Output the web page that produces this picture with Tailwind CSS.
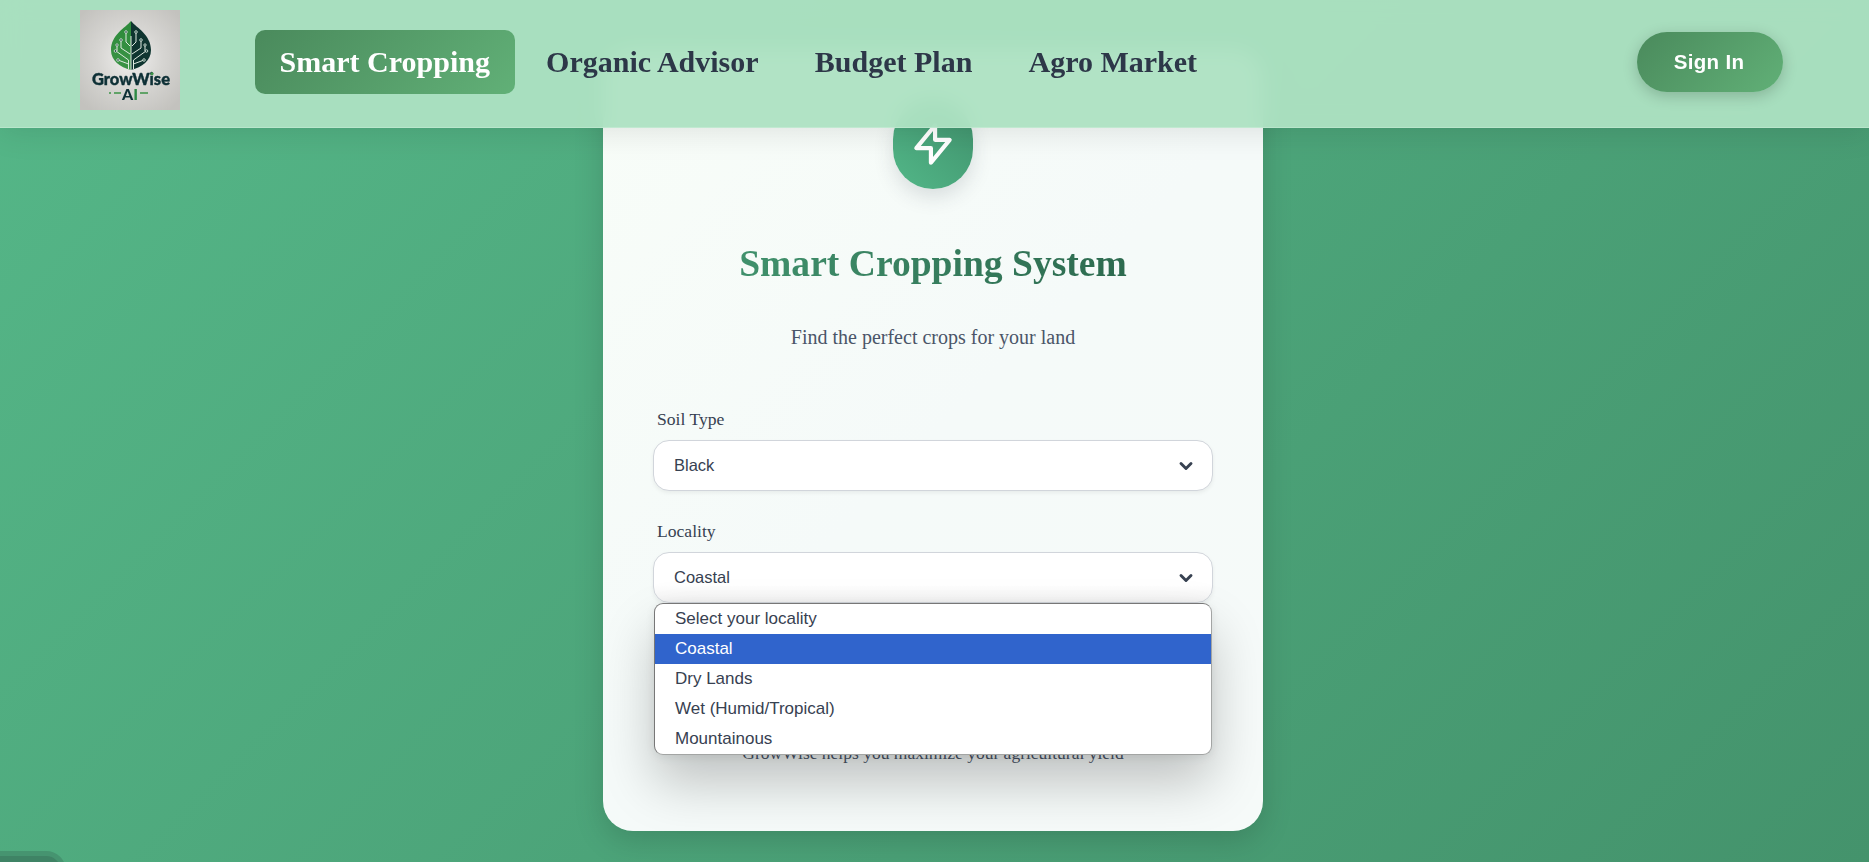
<!DOCTYPE html>
<html lang="en">
<head>
<meta charset="utf-8">
<title>GrowWise AI - Smart Cropping</title>
<script src="https://cdn.jsdelivr.net/npm/@tailwindcss/browser@4"></script>
</head>
<body class="relative h-[862px] overflow-hidden bg-[linear-gradient(135deg,#55b788_0%,#44936c_100%)] font-['Liberation_Serif',serif]">

<header class="absolute inset-x-0 top-0 z-20 flex h-32 items-start border-b border-white/20 bg-[#ade1c2]/95 pl-20 pr-[86px] shadow-[0_4px_30px_rgba(0,0,0,0.1)] backdrop-blur-[10px]">
  <svg class="mt-2.5 h-[100px] w-[100px] shrink-0" viewBox="0 0 100 100">
    <defs>
      <radialGradient id="lg-bg" cx="50%" cy="48%" r="65%"><stop offset="0" stop-color="#f1f0ef"/><stop offset=".5" stop-color="#d6d5d2"/><stop offset="1" stop-color="#c3c2be"/></radialGradient>
      <linearGradient id="lg-leaf" x1="0" y1="0" x2="0" y2="1"><stop offset="0" stop-color="#2c8a3a"/><stop offset="1" stop-color="#3c9447"/></linearGradient>
    </defs>
    <rect width="100" height="100" fill="url(#lg-bg)"/>
    <path d="M51 11C45 18 31 25 31 40C31 51 40 57 51 60Z" fill="url(#lg-leaf)"/>
    <path d="M51 11C57 18 71 25 71 40C71 51 62 57 51 60Z" fill="#0f3530"/>
    <g fill="none" stroke="#dfeae0" stroke-width="1">
      <path d="M51 60V26M48.5 59V50L36 41M48.5 54L38 50M50 44L41 38V31M50 36L46 32V23M53.500 59V50L66 41M53.500 54L64 50M52 44L61 38V31M52 36L56 32V23M37 36V41M65 36V41"/>
    </g>
    <g fill="#12403a" stroke="#dfeae0" stroke-width=".8">
      <circle cx="46" cy="22" r="1.3"/><circle cx="56" cy="22" r="1.3"/><circle cx="41" cy="30" r="1.3"/><circle cx="61" cy="30" r="1.3"/><circle cx="37" cy="35" r="1.2"/><circle cx="65" cy="35" r="1.2"/><circle cx="35.500" cy="41" r="1.3"/><circle cx="66.500" cy="41" r="1.3"/><circle cx="38" cy="50" r="1.3"/><circle cx="64" cy="50" r="1.3"/>
    </g>
    <text x="12" y="75" textLength="78" lengthAdjust="spacingAndGlyphs" class="font-['Lato',sans-serif] text-[16.5px] font-black" fill="#0e3036" stroke="#0e3036" stroke-width=".4">GrowWise</text>
    <circle cx="72" cy="63.8" r="1.5" fill="#3c9447"/>
    <text x="42" y="89.5" textLength="16" lengthAdjust="spacingAndGlyphs" class="font-['Lato',sans-serif] text-[15px] font-black" fill="#0e3036">A<tspan fill="#2f8a45">I</tspan></text>
    <path d="M29 83h2M34 83h7M60 83h8" stroke="#3c9447" stroke-width="1.5"/>
  </svg>
  <nav class="ml-[75px] mt-[30px] flex gap-[7px] text-[30px] font-bold leading-[64px] text-[#2d3748]">
    <a class="h-16 rounded-[10px] bg-[linear-gradient(135deg,#4a8a5c,#61b077)] px-[24.6px] text-white">Smart Cropping</a>
    <a class="px-[24.6px]">Organic Advisor</a>
    <a class="px-[24.6px]">Budget Plan</a>
    <a class="px-[24.6px]">Agro Market</a>
  </nav>
  <button class="ml-auto mt-8 h-[60px] w-[146px] rounded-[30px] bg-[linear-gradient(135deg,#4a8a5c,#61b077)] pr-0.5 font-['Liberation_Sans',sans-serif] text-[20.5px] font-bold tracking-[0.3px] text-white shadow-[0_4px_15px_rgba(0,0,0,0.2)]">Sign In</button>
</header>

<main class="flex justify-center pr-[3px] pt-[49px]">
  <section class="flex h-[782px] w-[660px] flex-col items-center rounded-[30px] bg-[linear-gradient(135deg,#f8fdf8_0%,#f5faf9_50%,#f6faf9_100%)] px-[50px] pt-[50px] shadow-[0_10px_30px_rgba(0,0,0,0.15)]">
    <div class="flex h-[90px] w-20 shrink-0 items-center justify-center rounded-full bg-[linear-gradient(45deg,#52b788,#40916c)] shadow-[0_8px_20px_rgba(45,55,72,0.15)]">
      <svg class="h-[50px] w-[50px] shrink-0" viewBox="0 0 24 24" fill="none" stroke="#fff" stroke-width="2" stroke-linecap="round" stroke-linejoin="round"><path d="M13 10V3L4 14h7v7l9-11h-7z"/></svg>
    </div>
    <h1 class="mt-[51px] bg-[linear-gradient(90deg,#40916c,#2d6a4f)] bg-clip-text text-[37.6px] font-bold leading-[48px] text-transparent">Smart Cropping System</h1>
    <p class="mt-[37px] text-[20px] leading-6 text-[#4a5568]">Find the perfect crops for your land</p>
    <form class="mt-[58px] w-full text-[16.5px] text-[#374151]">
      <label class="block pl-1 text-[17.6px] leading-6">Soil Type</label>
      <div class="mt-[9px] flex h-[51px] items-center justify-between rounded-2xl border border-[#d1d5db] bg-white pl-5 pr-4 font-['Liberation_Sans',sans-serif] shadow-[0_2px_4px_rgba(0,0,0,0.06)]">
        <span>Black</span>
        <svg class="h-5 w-5" viewBox="0 0 24 24" fill="none" stroke="#374151" stroke-width="3.5" stroke-linecap="round" stroke-linejoin="round"><path d="m6 9 6 6 6-6"/></svg>
      </div>
      <label class="mt-[28px] block pl-1 text-[17.6px] leading-6">Locality</label>
      <div class="relative mt-[9px]">
        <div class="flex h-[51px] items-center justify-between rounded-2xl border border-[#d1d5db] bg-[linear-gradient(#fff_65%,#f3f3f3)] pl-5 pr-4 font-['Liberation_Sans',sans-serif] shadow-[0_2px_4px_rgba(0,0,0,0.06)]">
          <span>Coastal</span>
          <svg class="h-5 w-5" viewBox="0 0 24 24" fill="none" stroke="#374151" stroke-width="3.5" stroke-linecap="round" stroke-linejoin="round"><path d="m6 9 6 6 6-6"/></svg>
        </div>
        <ul class="absolute left-px top-[51px] z-10 w-[558px] overflow-hidden rounded-[9px] border border-[#a3a5a4] border-l-[#777] border-t-[#777] bg-white font-['Liberation_Sans',sans-serif] text-[17px] leading-[30px] shadow-[0_28px_52px_rgba(0,0,0,0.22),0_2px_10px_rgba(0,0,0,0.08)]">
          <li class="h-[30px] pl-5">Select your locality</li>
          <li class="h-[30px] bg-[#3064cc] pl-5 text-white">Coastal</li>
          <li class="h-[30px] pl-5">Dry Lands</li>
          <li class="h-[30px] pl-5">Wet (Humid/Tropical)</li>
          <li class="h-[30px] pl-5">Mountainous</li>
        </ul>
      </div>
    </form>
    <p class="mt-[138px] text-[17.5px] leading-6 text-[#4a5568]">GrowWise helps you maximize your agricultural yield</p>
  </section>
</main>

<div class="absolute -left-5 top-[851px] h-12 w-[86px] rounded-[20px] border-[5px] border-[#469470] bg-[#3f8365]"></div>
</body>
</html>
